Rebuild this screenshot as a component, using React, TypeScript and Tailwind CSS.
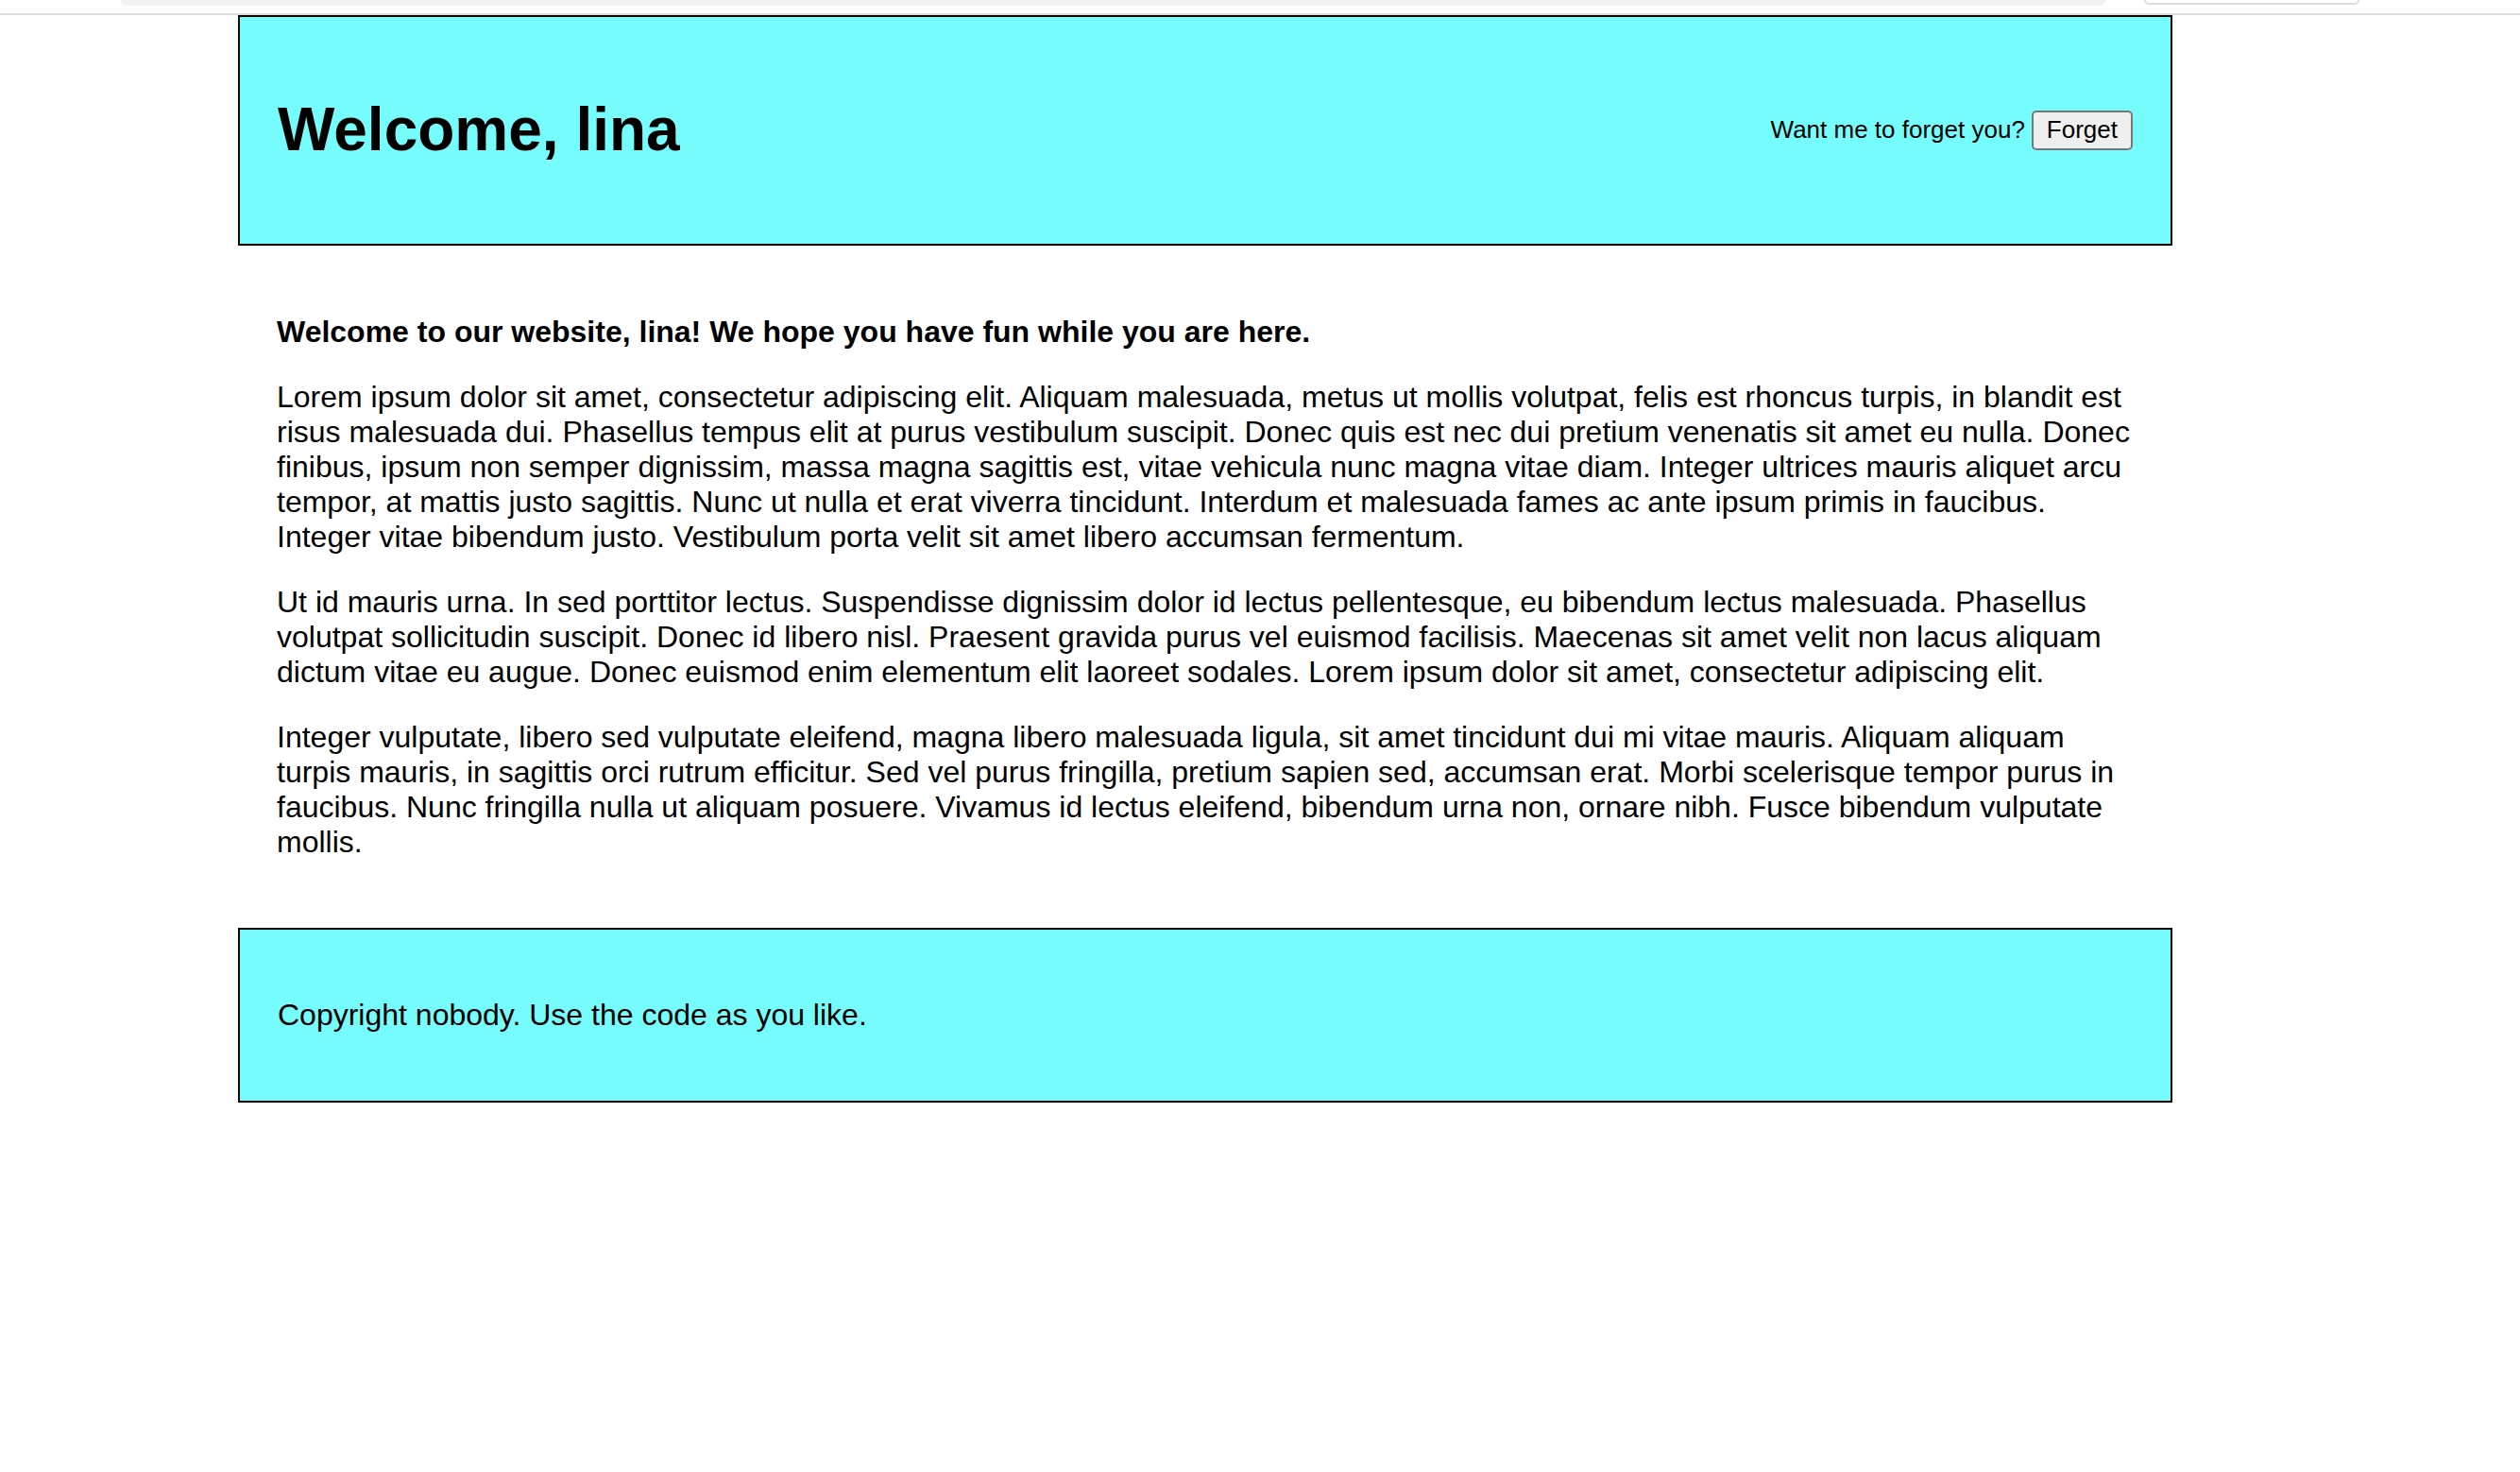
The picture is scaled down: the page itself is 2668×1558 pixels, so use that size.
import React from "react";

const paragraphs = [
  "Lorem ipsum dolor sit amet, consectetur adipiscing elit. Aliquam malesuada, metus ut mollis volutpat, felis est rhoncus turpis, in blandit est risus malesuada dui. Phasellus tempus elit at purus vestibulum suscipit. Donec quis est nec dui pretium venenatis sit amet eu nulla. Donec finibus, ipsum non semper dignissim, massa magna sagittis est, vitae vehicula nunc magna vitae diam. Integer ultrices mauris aliquet arcu tempor, at mattis justo sagittis. Nunc ut nulla et erat viverra tincidunt. Interdum et malesuada fames ac ante ipsum primis in faucibus. Integer vitae bibendum justo. Vestibulum porta velit sit amet libero accumsan fermentum.",
  "Ut id mauris urna. In sed porttitor lectus. Suspendisse dignissim dolor id lectus pellentesque, eu bibendum lectus malesuada. Phasellus volutpat sollicitudin suscipit. Donec id libero nisl. Praesent gravida purus vel euismod facilisis. Maecenas sit amet velit non lacus aliquam dictum vitae eu augue. Donec euismod enim elementum elit laoreet sodales. Lorem ipsum dolor sit amet, consectetur adipiscing elit.",
  "Integer vulputate, libero sed vulputate eleifend, magna libero malesuada ligula, sit amet tincidunt dui mi vitae mauris. Aliquam aliquam turpis mauris, in sagittis orci rutrum efficitur. Sed vel purus fringilla, pretium sapien sed, accumsan erat. Morbi scelerisque tempor purus in faucibus. Nunc fringilla nulla ut aliquam posuere. Vivamus id lectus eleifend, bibendum urna non, ornare nibh. Fusce bibendum vulputate mollis.",
];

export default function App() {
  const name = "lina";

  return (
    <div className="min-h-screen bg-white text-black font-['Liberation_Sans',Arial,sans-serif]">
      {/* leftover browser chrome at the top */}
      <div className="flex items-start h-[16px] border-b-2 border-[#dcdcdc]">
        <div className="ml-[128px] w-[2101px] h-[6px] rounded-b-[10px] bg-[#f1f2f4]" />
        <div className="ml-[41px] w-[228px] h-[5px] rounded-b-[10px] border-2 border-t-0 border-[#dedede]" />
      </div>

      <div className="ml-[252px] w-[2048px]">
        <header className="flex items-center justify-between border-2 border-black bg-[#77fcfd] px-[40px] py-[40px]">
          <h1 className="my-[43px] text-[64px] font-bold leading-[1.15]">
            Welcome, {name}
          </h1>
          <div className="flex items-center gap-[7px] text-[26px] leading-[1.15]">
            <span>Want me to forget you?</span>
            <button className="h-[42px] px-[14px] rounded-[5px] border-2 border-[#777777] bg-[#efefef] text-[26px] leading-[1.15]">
              Forget
            </button>
          </div>
        </header>

        <main className="px-[41px] pt-[41px] pb-[40px] text-[32px] leading-[37px]">
          <p className="my-[32px] font-bold">
            Welcome to our website, {name}! We hope you have fun while you are
            here.
          </p>
          {paragraphs.map((text, idx) => (
            <p key={idx} className="my-[32px]">
              {text}
            </p>
          ))}
        </main>

        <footer className="border-2 border-black bg-[#77fcfd] px-[40px] py-[40px] text-[32px] leading-[37px]">
          <p className="my-[32px]">Copyright nobody. Use the code as you like.</p>
        </footer>
      </div>
    </div>
  );
}
